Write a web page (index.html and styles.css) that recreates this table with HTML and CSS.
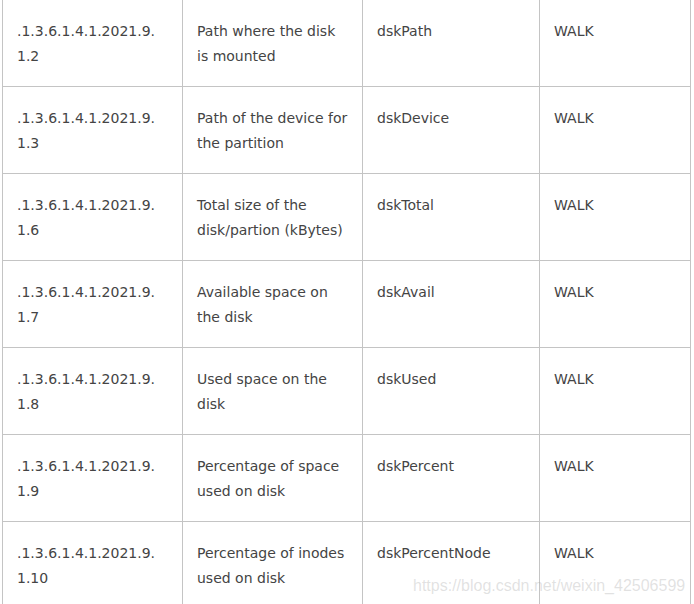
FILE: index.html
```html
<!DOCTYPE html>
<html lang="en">
<head>
<meta charset="utf-8">
<title>UCD-SNMP disk OIDs</title>
<link rel="stylesheet" href="styles.css">
</head>
<body>
<div class="page">
  <table class="oid-table">
    <colgroup>
      <col class="c-oid">
      <col class="c-desc">
      <col class="c-name">
      <col class="c-op">
    </colgroup>
    <tbody>
      <tr><td>.1.3.6.1.4.1.2021.9.1.2</td><td>Path where the disk is mounted</td><td>dskPath</td><td>WALK</td></tr>
      <tr><td>.1.3.6.1.4.1.2021.9.1.3</td><td>Path of the device for the partition</td><td>dskDevice</td><td>WALK</td></tr>
      <tr><td>.1.3.6.1.4.1.2021.9.1.6</td><td>Total size of the disk/partion (kBytes)</td><td>dskTotal</td><td>WALK</td></tr>
      <tr><td>.1.3.6.1.4.1.2021.9.1.7</td><td>Available space on the disk</td><td>dskAvail</td><td>WALK</td></tr>
      <tr><td>.1.3.6.1.4.1.2021.9.1.8</td><td>Used space on the disk</td><td>dskUsed</td><td>WALK</td></tr>
      <tr><td>.1.3.6.1.4.1.2021.9.1.9</td><td>Percentage of space used on disk</td><td>dskPercent</td><td>WALK</td></tr>
      <tr><td>.1.3.6.1.4.1.2021.9.1.10</td><td>Percentage of inodes used on disk</td><td>dskPercentNode</td><td>WALK</td></tr>
    </tbody>
  </table>
  <div class="watermark">https://blog.csdn.net/weixin_42506599</div>
</div>
</body>
</html>
```
FILE: styles.css
```css
html, body {
  margin: 0;
  padding: 0;
  background: #ffffff;
}

.page {
  position: relative;
  padding: 0 2px;
  height: 604px;
  overflow: hidden;
}

.oid-table {
  width: 688px;
  margin-top: -1px;
  border-collapse: collapse;
  table-layout: fixed;
  font-family: "DejaVu Sans", Verdana, sans-serif;
  font-size: 14px;
  line-height: 25px;
  color: #444444;
}

.c-oid { width: 180px; }
.c-desc { width: 180px; }
.c-name { width: 177px; }
.c-op { width: 151px; }

.oid-table td {
  border: 1px solid #c4c4c4;
  padding: 19px 12px 17px 14px;
  vertical-align: top;
  word-break: break-word;
}

.oid-table td:first-child {
  padding-right: 20px;
  word-break: break-all;
}

.watermark {
  position: absolute;
  left: 413px;
  top: 577px;
  font-family: "Liberation Sans", Arial, sans-serif;
  font-size: 16px;
  line-height: 18px;
  color: rgba(170, 170, 170, 0.35);
  white-space: nowrap;
  pointer-events: none;
}
```
